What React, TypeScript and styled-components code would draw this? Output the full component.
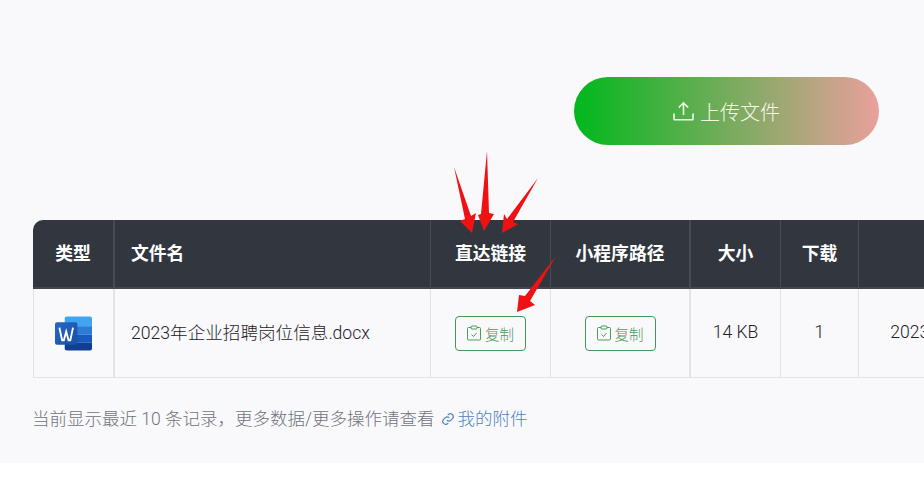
import styled, { createGlobalStyle } from "styled-components";

const font = `Roboto, "Noto Sans CJK SC", sans-serif`;

const GlobalStyle = createGlobalStyle`
  html, body {
    margin: 0;
    padding: 0;
    background: #fff;
    overflow: hidden;
  }
  * {
    box-sizing: border-box;
  }
`;

const columns = [
  { title: "类型", width: 82, thick: true },
  { title: "文件名", width: 316, left: true },
  { title: "直达链接", width: 120 },
  { title: "小程序路径", width: 140, thick: true },
  { title: "大小", width: 90 },
  { title: "下载", width: 78 },
  { title: "", width: 222 },
];

// red marker arrows drawn over the table, page coords minus (443, 145)
const arrowShapes = [
  "11,22 28,71 33,68 29,88 17,76 22,74",
  "44,6 46,68 51,69 41,86 35,70 38,69",
  "95,33 70,77 75,79 59,88 61,69 64,74",
  "113,111 87,156 92,160 74,167 76,150 82,151",
];

const WordIcon = () => (
  <svg width="37" height="35" viewBox="0 0 38 35">
    <defs>
      <linearGradient id="wordBadge" x1="0" y1="0" x2="1" y2="1">
        <stop offset="0" stopColor="#2368c4" />
        <stop offset="1" stopColor="#1a4fa8" />
      </linearGradient>
    </defs>
    <path d="M10 2a2 2 0 0 1 2-2h24a2 2 0 0 1 2 2v8H10z" fill="#41a5ee" />
    <rect x="10" y="10" width="28" height="8.5" fill="#2b7cd3" />
    <rect x="10" y="18.5" width="28" height="8.5" fill="#185abd" />
    <path d="M10 27h28v6a2 2 0 0 1-2 2H12a2 2 0 0 1-2-2z" fill="#103f91" />
    <rect x="0" y="6" width="23" height="23" rx="2" fill="url(#wordBadge)" />
    <path
      d="M4.500 11.500l2.800 13h1.800l2.400-9 2.400 9h1.800l2.800-13"
      fill="none"
      stroke="#fff"
      strokeWidth="1.900"
    />
  </svg>
);

const ClipboardIcon = () => (
  <svg width="14" height="16" viewBox="0 0 14 16" fill="none" stroke="#4a9a5c" strokeWidth="1">
    <path d="M4 2.500H1.500a1 1 0 0 0-1 1v10.500a1 1 0 0 0 1 1h11a1 1 0 0 0 1-1V3.500a1 1 0 0 0-1-1H10" />
    <rect x="4" y="1" width="6" height="3" rx="1" />
    <path d="M4.500 9.500l2 2 3-3.500" />
  </svg>
);

const CopyButton = () => (
  <Copy>
    <ClipboardIcon />
    复制
  </Copy>
);

const App = () => (
  <>
    <GlobalStyle />
    <Page>
      <UploadRow>
        <UploadButton>
          <svg width="21" height="20" viewBox="0 0 21 20" fill="none" stroke="currentColor" strokeWidth="1.600">
            <path d="M10.500 14V2M5.800 6.500l4.700-4.700 4.700 4.700M1 12.500V18a.8.8 0 0 0 .8.8h17.400a.8.8 0 0 0 .8-.8v-5.500" />
          </svg>
          上传文件
        </UploadButton>
      </UploadRow>

      <TableBox>
        <Arrows width="120" height="175" viewBox="0 0 120 175">
          {arrowShapes.map((points) => (
            <polygon key={points} points={points} fill="#f01212" />
          ))}
        </Arrows>
        <Table>
          <colgroup>
            {columns.map((col) => (
              <col key={col.width} style={{ width: col.width }} />
            ))}
          </colgroup>
          <thead>
            <tr>
              {columns.map((col) => (
                <HeadCell key={col.width} $left={col.left} $thick={col.thick}>
                  {col.title}
                </HeadCell>
              ))}
            </tr>
          </thead>
          <tbody>
            <tr>
              <Cell $thick>
                <IconSlot>
                  <WordIcon />
                </IconSlot>
              </Cell>
              <Cell $left>2023年企业招聘岗位信息.docx</Cell>
              <Cell>
                <CopyButton />
              </Cell>
              <Cell $thick>
                <CopyButton />
              </Cell>
              <Cell>14 KB</Cell>
              <Cell>1</Cell>
              <Cell>2023-09-21 10:36:52</Cell>
            </tr>
          </tbody>
        </Table>
      </TableBox>

      <Note>
        当前显示最近 10 条记录，更多数据/更多操作请查看
        <NoteLink>
          <svg width="14" height="14" viewBox="0 0 24 24" fill="none" stroke="currentColor" strokeWidth="2">
            <path d="M10 14a5 5 0 0 0 7 0l3-3a5 5 0 0 0-7-7l-1.500 1.500" />
            <path d="M14 10a5 5 0 0 0-7 0l-3 3a5 5 0 0 0 7 7l1.500-1.500" />
          </svg>
          我的附件
        </NoteLink>
      </Note>
    </Page>
  </>
);

export default App;

const Page = styled.div`
  width: 924px;
  height: 463px;
  padding-top: 77px;
  background: #f9f9fb;
  font-family: ${font};
  overflow: hidden;
`;

const UploadRow = styled.div`
  display: flex;
  justify-content: flex-end;
  padding-right: 45px;
`;

const UploadButton = styled.button`
  width: 305px;
  height: 68px;
  display: flex;
  align-items: center;
  justify-content: center;
  gap: 6px;
  border: none;
  border-radius: 34px;
  background: linear-gradient(90deg, #00b81c 0%, #e9a09c 100%);
  color: #f4fbe9;
  font-family: ${font};
  font-size: 20px;
  font-weight: 300;
`;

const TableBox = styled.div`
  position: relative;
  margin: 75px 0 0 33px;
  width: 1048px;
`;

const Arrows = styled.svg`
  position: absolute;
  left: 410px;
  top: -75px;
  z-index: 1;
`;

const Table = styled.table`
  width: 1048px;
  table-layout: fixed;
  border-collapse: separate;
  border-spacing: 0;
`;

const HeadCell = styled.th<{ $left?: boolean; $thick?: boolean }>`
  height: 69px;
  padding: ${({ $left }) => ($left ? "0 0 3px 16px" : "0 0 3px")};
  background: #32373f;
  border-right: ${({ $thick }) => ($thick ? "2px" : "1px")} solid #464b54;
  border-bottom: 2px solid #42464e;
  color: #fff;
  font-size: 17.800px;
  font-weight: 700;
  text-align: ${({ $left }) => ($left ? "left" : "center")};

  &:first-child {
    border-top-left-radius: 10px;
  }
`;

const Cell = styled.td<{ $left?: boolean; $thick?: boolean }>`
  height: 89px;
  padding: ${({ $left }) => ($left ? "0 0 3px 16px" : "0 0 3px")};
  border-right: ${({ $thick }) => ($thick ? "2px" : "1px")} solid #e2e3e7;
  border-bottom: 1px solid #e2e3e7;
  color: #1e2127;
  font-size: 17.600px;
  font-weight: 300;
  text-align: ${({ $left }) => ($left ? "left" : "center")};

  &:first-child {
    border-left: 1px solid #e2e3e7;
  }
`;

const IconSlot = styled.div`
  display: flex;
  justify-content: center;
  padding-top: 3px;
`;

const Copy = styled.button`
  width: 71px;
  height: 35px;
  margin-top: 3px;
  display: inline-flex;
  align-items: center;
  justify-content: center;
  gap: 4px;
  border: 1px solid #3f9a58;
  border-radius: 4px;
  background: transparent;
  color: #4a9a5c;
  font-family: ${font};
  font-size: 14.500px;
  font-weight: 300;
`;

const Note = styled.div`
  margin: 30px 0 0 32px;
  color: #6f747c;
  font-size: 17.500px;
  font-weight: 300;
  line-height: 22px;
`;

const NoteLink = styled.a`
  margin-left: 7px;
  color: #4f84c4;

  svg {
    vertical-align: -1px;
    margin-right: 2px;
  }
`;
